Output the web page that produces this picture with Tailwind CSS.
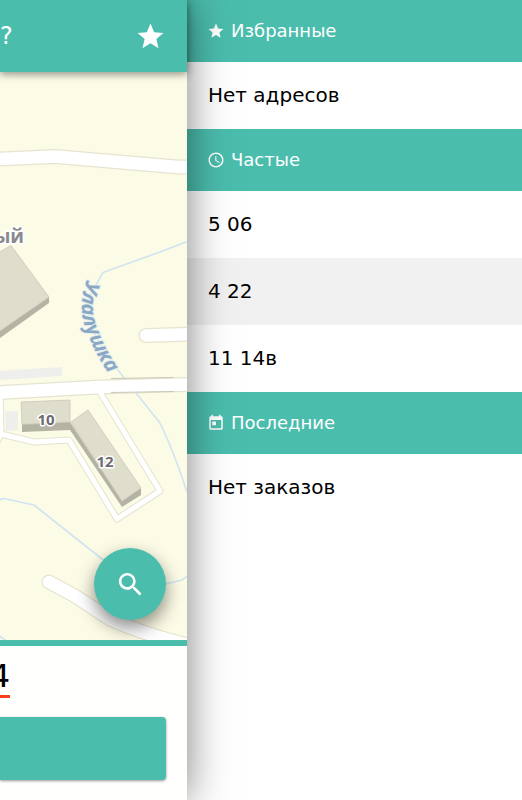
<!DOCTYPE html>
<html lang="ru">
  <head>
    <meta charset="UTF-8" />
    <meta name="viewport" content="width=device-width, initial-scale=1.0" />
    <title>Такси</title>
    <script src="https://cdn.jsdelivr.net/npm/@tailwindcss/browser@4"></script>
  </head>
  <body class="flex h-screen overflow-hidden bg-white font-['DejaVu_Sans',sans-serif] text-black">
    <!-- main view, pushed to the left by the open menu -->
    <main class="relative z-10 flex w-[187px] shrink-0 flex-col bg-white shadow-[0_0_40px_rgba(0,0,0,0.5)]">
      <header class="relative z-10 flex h-[72px] shrink-0 items-center justify-between bg-[#4bbdad] pr-[21px] text-white shadow-[0_2px_8px_rgba(0,0,0,0.45)]">
        <h1 class="text-2xl">?</h1>
        <button type="button" aria-label="Избранное">
          <svg class="size-[31px]" viewBox="0 0 24 24" fill="currentColor">
            <path d="M12 17.27L18.18 21l-1.64-7.03L22 9.24l-7.19-.61L12 2 9.19 8.63 2 9.24l5.46 4.73L5.82 21z" />
          </svg>
        </button>
      </header>

      <div class="relative min-h-0 flex-1 overflow-hidden bg-[#fcfbe6]">
        <svg class="size-full" viewBox="0 72 187 568" preserveAspectRatio="xMidYMid slice" fill="none" stroke-linejoin="round">
          <!-- water -->
          <g stroke="#d0e5f0" stroke-width="1.7">
            <path d="M187 241.500L160 252L103 272.500L96 285C78 310 92 335 118 370L136 393L160 423Q174 452 187 492" />
            <path d="M-2 500L4 498.500L34 505L78 540L130 581L166 584L182 580L190 574" />
            <path d="M-2 635L8 642" />
          </g>
          <!-- yards -->
          <path fill="#eeeeec" d="M0 371L62 367V376L0 380zM5 411.500L18 411V430L6 431z" />
          <!-- roads: outline, then fill -->
          <g stroke="#e6e4d0" stroke-linecap="round">
            <g stroke-width="7">
              <path d="M0 390L1 434L34 442L69 440L117 519L160 491L98 389" />
              <path d="M1 434L-4 444" />
            </g>
            <g stroke-width="15">
              <path d="M-10 159.500L0 159L55 156.500L178 167H200" />
              <path d="M146 335.500L200 334" />
              <path d="M-10 393L0 392.500L100 387L200 384" />
              <path d="M49 582L75 596L110 619Q145 635 200 648" />
            </g>
          </g>
          <g stroke="#fff" stroke-linecap="round">
            <g stroke-width="5">
              <path d="M0 390L1 434L34 442L69 440L117 519L160 491L98 389" />
              <path d="M1 434L-4 444" />
            </g>
            <g stroke-width="12.500">
              <path d="M-10 159.500L0 159L55 156.500L178 167H200" />
              <path d="M146 335.500L200 334" />
              <path d="M-10 393L0 392.500L100 387L200 384" />
              <path d="M49 582L75 596L110 619Q145 635 200 648" />
            </g>
          </g>
          <path stroke="#c9c7b8" d="M111 378.500L174 377.500M111 392.500L174 391.500" />
          <!-- buildings -->
          <path fill="#b5b3a4" d="M0 331L49 297V303L0 338zM22 424L70 422V430L22 432zM70 422L122 501L141 488V495L122 507L70 430z" />
          <path fill="#dfdecd" stroke="#c9c8b6" stroke-width=".8" d="M-2 253L11 245.500L49 297L-2 332zM21 402L70 400V422L22 424.500zM71 422L88 410L141 488L122 501z" />
          <!-- labels -->
          <g class="font-['Open_Sans',sans-serif] font-bold" stroke="#fff" stroke-width="3" paint-order="stroke">
            <text x="24" y="243" text-anchor="end" font-size="19" fill="#8a8a90">ый</text>
            <text x="46" y="425" text-anchor="middle" font-size="15" fill="#6c6c70">10</text>
            <text x="105" y="467" text-anchor="middle" font-size="15" fill="#6c6c70">12</text>
          </g>
          <path id="river" d="M87 280C80 298 80 318 88 334C94 350 100 362 116 384" />
          <text class="font-['Open_Sans',sans-serif] font-bold italic" font-size="20" fill="#8ba8c2" stroke="#e6f0f0" stroke-width="2" paint-order="stroke">
            <textPath href="#river">Улалушка</textPath>
          </text>
        </svg>
        <button type="button" aria-label="Поиск" class="absolute right-[21px] bottom-5 grid size-[72px] place-items-center rounded-full bg-[#4bbdad] text-white shadow-[0_8px_18px_rgba(0,0,0,0.45)]">
          <svg class="size-[31px]" viewBox="0 0 24 24" fill="currentColor">
            <path d="M15.500 14h-.79l-.28-.27C15.410 12.590 16 11.110 16 9.500 16 5.910 13.090 3 9.500 3S3 5.910 3 9.500 5.910 16 9.500 16c1.610 0 3.090-.59 4.230-1.570l.27.28v.79l5 4.990L20.490 19l-4.990-5zm-6 0C7.010 14 5 11.990 5 9.500S7.010 5 9.500 5 14 7.010 14 9.500 11.990 14 9.500 14z" />
          </svg>
        </button>
      </div>

      <section class="flex shrink-0 flex-col border-t-6 border-[#4bbdad] bg-[#fffffd] pt-3 pb-5">
        <div class="flex w-[10px] justify-end overflow-hidden border-b-3 border-[#f9401a]">
          <span class="text-[32px] leading-[37px]">4</span>
        </div>
        <button type="button" aria-label="Заказать" class="mt-[19px] mr-[21px] h-[63px] rounded-r-sm bg-[#4bbdad] shadow-[0_1px_3px_rgba(0,0,0,0.4)]"></button>
      </section>
    </main>

    <!-- menu -->
    <aside class="min-w-0 flex-1 text-xl">
      <h2 class="flex h-[62px] items-center gap-[6px] bg-[#4bbdad] px-5 pb-px text-lg text-white">
        <svg class="size-[18px]" viewBox="0 0 24 24" fill="currentColor">
          <path d="M12 17.27L18.18 21l-1.64-7.03L22 9.24l-7.19-.61L12 2 9.19 8.63 2 9.24l5.46 4.73L5.82 21z" />
        </svg>
        Избранные
      </h2>
      <p class="flex h-[67px] items-center px-[21px] pb-[2px]">Нет адресов</p>

      <h2 class="flex h-[62px] items-center gap-[6px] bg-[#4bbdad] px-5 pb-px text-lg text-white">
        <svg class="size-[18px]" viewBox="0 0 24 24" fill="currentColor">
          <path d="M11.990 2C6.470 2 2 6.480 2 12s4.470 10 9.990 10C17.520 22 22 17.520 22 12S17.520 2 11.990 2zM12 20c-4.420 0-8-3.580-8-8s3.580-8 8-8 8 3.580 8 8-3.580 8-8 8zm.5-13H11v6l5.250 3.150.75-1.230-4.500-2.670z" />
        </svg>
        Частые
      </h2>
      <ul>
        <li><button type="button" class="flex h-[67px] w-full items-center px-[21px] pb-[2px]">5 06</button></li>
        <li><button type="button" class="flex h-[67px] w-full items-center bg-[#f1f1f1] px-[21px] pb-[2px]">4 22</button></li>
        <li><button type="button" class="flex h-[67px] w-full items-center px-[21px] pb-[2px]">11 14в</button></li>
      </ul>

      <h2 class="flex h-[62px] items-center gap-[6px] bg-[#4bbdad] px-5 pb-px text-lg text-white">
        <svg class="size-[18px]" viewBox="0 0 24 24" fill="currentColor">
          <path d="M19 3h-1V1h-2v2H8V1H6v2H5c-1.110 0-1.990.9-1.990 2L3 19c0 1.100.89 2 2 2h14c1.100 0 2-.9 2-2V5c0-1.100-.9-2-2-2zm0 16H5V8h14v11zM7 10h5v5H7z" />
        </svg>
        Последние
      </h2>
      <p class="flex h-[67px] items-center px-[21px] pb-[2px]">Нет заказов</p>
    </aside>
  </body>
</html>
